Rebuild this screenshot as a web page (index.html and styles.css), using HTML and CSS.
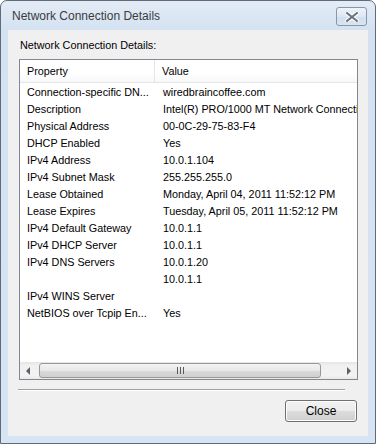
FILE: index.html
```html
<!DOCTYPE html>
<html lang="en">
<head>
    <meta charset="UTF-8">
    <meta name="viewport" content="width=device-width, initial-scale=1.0">
    <title>Network Connection Details</title>
    <link rel="stylesheet" href="styles.css">
</head>
<body>
    <div class="window">
        <div class="titlebar">
            <span class="title">Network Connection Details</span>
            <div class="close-x">
                <svg width="14" height="10" viewBox="0 0 14 10">
                    <path d="M2 1 L12 9 M12 1 L2 9" stroke="#ffffff" stroke-width="4" stroke-linecap="square"/>
                    <path d="M2 1 L12 9 M12 1 L2 9" stroke="#6a7480" stroke-width="2" stroke-linecap="square"/>
                </svg>
            </div>
        </div>
        <div class="client">
            <div class="caption">Network Connection Details:</div>
            <div class="list">
                <div class="list-header">
                    <div class="col col-prop">Property</div>
                    <div class="col col-val">Value</div>
                </div>
                <div class="rows">
                    <div class="row"><span>Connection-specific DN...</span><span>wiredbraincoffee.com</span></div>
                    <div class="row"><span>Description</span><span>Intel(R) PRO/1000 MT Network Connecti</span></div>
                    <div class="row"><span>Physical Address</span><span>00-0C-29-75-83-F4</span></div>
                    <div class="row"><span>DHCP Enabled</span><span>Yes</span></div>
                    <div class="row"><span>IPv4 Address</span><span>10.0.1.104</span></div>
                    <div class="row"><span>IPv4 Subnet Mask</span><span>255.255.255.0</span></div>
                    <div class="row"><span>Lease Obtained</span><span>Monday, April 04, 2011 11:52:12 PM</span></div>
                    <div class="row"><span>Lease Expires</span><span>Tuesday, April 05, 2011 11:52:12 PM</span></div>
                    <div class="row"><span>IPv4 Default Gateway</span><span>10.0.1.1</span></div>
                    <div class="row"><span>IPv4 DHCP Server</span><span>10.0.1.1</span></div>
                    <div class="row"><span>IPv4 DNS Servers</span><span>10.0.1.20</span></div>
                    <div class="row"><span></span><span>10.0.1.1</span></div>
                    <div class="row"><span>IPv4 WINS Server</span><span></span></div>
                    <div class="row"><span>NetBIOS over Tcpip En...</span><span>Yes</span></div>
                </div>
                <div class="hscroll">
                    <div class="arrow arrow-left"></div>
                    <div class="track">
                        <div class="thumb"><span class="grip"></span></div>
                    </div>
                    <div class="arrow arrow-right"></div>
                </div>
            </div>
            <div class="separator"></div>
            <div class="button-row">
                <button class="btn">Close</button>
            </div>
        </div>
    </div>
</body>
</html>
```

FILE: styles.css
```css
body {
    margin: 0;
    font-family: "Liberation Sans", Arial, sans-serif;
    font-size: 10.8px;
    color: #000;
    background: #ffffff;
}
.window {
    width: 376px;
    height: 444px;
    box-sizing: border-box;
    border: 1px solid #5f6b78;
    border-radius: 7px 7px 0 0;
    background: linear-gradient(to bottom, #e3ecf6 0, #d3e1f1 30px, #d6e4f3 100%);
    padding: 0 7px 7px 7px;
    display: flex;
    flex-direction: column;
}
.titlebar {
    height: 29px;
    display: flex;
    align-items: center;
    justify-content: space-between;
    flex-shrink: 0;
}
.title {
    font-size: 12px;
    color: #3b3b3b;
    padding-left: 4px;
    padding-top: 1px;
}
.close-x {
    width: 29px;
    height: 17px;
    margin-right: 1px;
    margin-top: 2px;
    border: 1px solid #8796a8;
    border-radius: 3px;
    background: linear-gradient(to bottom, #eef3f9 0, #dde7f2 50%, #d2deec 51%, #dae5f1 100%);
    display: flex;
    align-items: center;
    justify-content: center;
}
.client {
    flex: 1;
    background: #f0f0f0;
    padding: 9px 10px 0 11px;
    display: flex;
    flex-direction: column;
}
.caption {
    line-height: 13px;
    padding-left: 1px;
}
.list {
    margin-top: 7px;
    height: 321px;
    box-sizing: border-box;
    border: 1px solid #828790;
    background: #fff;
    display: flex;
    flex-direction: column;
    overflow: hidden;
}
.list-header {
    height: 23px;
    box-sizing: border-box;
    display: grid;
    grid-template-columns: 135px 1fr;
    border-bottom: 1px solid #e5e5e5;
    background: linear-gradient(to bottom, #ffffff 0, #ffffff 60%, #f7f8fa 100%);
    flex-shrink: 0;
}
.col {
    padding-left: 7px;
    line-height: 22px;
}
.col-prop {
    border-right: 1px solid #e5e5e5;
}
.rows {
    flex: 1;
    padding-top: 1px;
}
.row {
    display: grid;
    grid-template-columns: 135px 1fr;
    height: 17px;
    line-height: 17px;
    white-space: nowrap;
}
.row span {
    padding-left: 7px;
    overflow: hidden;
}
.row span + span {
    padding-left: 8px;
}
.hscroll {
    height: 17px;
    display: flex;
    flex-shrink: 0;
    background: linear-gradient(to bottom, #e5e5e5 0, #f0f0f0 20%, #f3f3f3 80%, #e8e8e8 100%);
}
.arrow {
    width: 17px;
    position: relative;
}
.arrow::after {
    content: "";
    position: absolute;
    top: 5px;
    width: 0;
    height: 0;
    border-top: 4px solid transparent;
    border-bottom: 4px solid transparent;
}
.arrow-left::after {
    left: 6px;
    border-right: 4px solid #606060;
}
.arrow-right::after {
    left: 7px;
    border-left: 4px solid #606060;
}
.track {
    flex: 1;
    padding: 1px 19px 1px 2px;
    display: flex;
}
.thumb {
    flex: 1;
    box-sizing: border-box;
    border: 1px solid #979797;
    border-radius: 3px;
    background: linear-gradient(to bottom, #f4f4f4 0, #e8e8e8 50%, #d9d9d9 51%, #d0d0d0 100%);
    display: flex;
    align-items: center;
    justify-content: center;
}
.grip {
    width: 7px;
    height: 7px;
    background: repeating-linear-gradient(to right, #5a5a5a 0, #5a5a5a 1px, transparent 1px, transparent 3px);
}
.separator {
    margin: 9px 13px 0 -1px;
    height: 1px;
    border-bottom: 1px solid #ffffff;
    background: #a0a0a0;
}
.button-row {
    display: flex;
    justify-content: flex-end;
    margin-top: 9px;
    padding-right: 1px;
}
.btn {
    width: 72px;
    height: 22px;
    border: 1px solid #707070;
    border-radius: 3px;
    background: linear-gradient(to bottom, #f2f2f2 0, #ebebeb 49%, #dddddd 50%, #cfcfcf 100%);
    font-family: "Liberation Sans", Arial, sans-serif;
    font-size: 12px;
    color: #000;
    padding: 0;
    box-shadow: inset 0 0 0 1px #fcfcfc;
}
```
